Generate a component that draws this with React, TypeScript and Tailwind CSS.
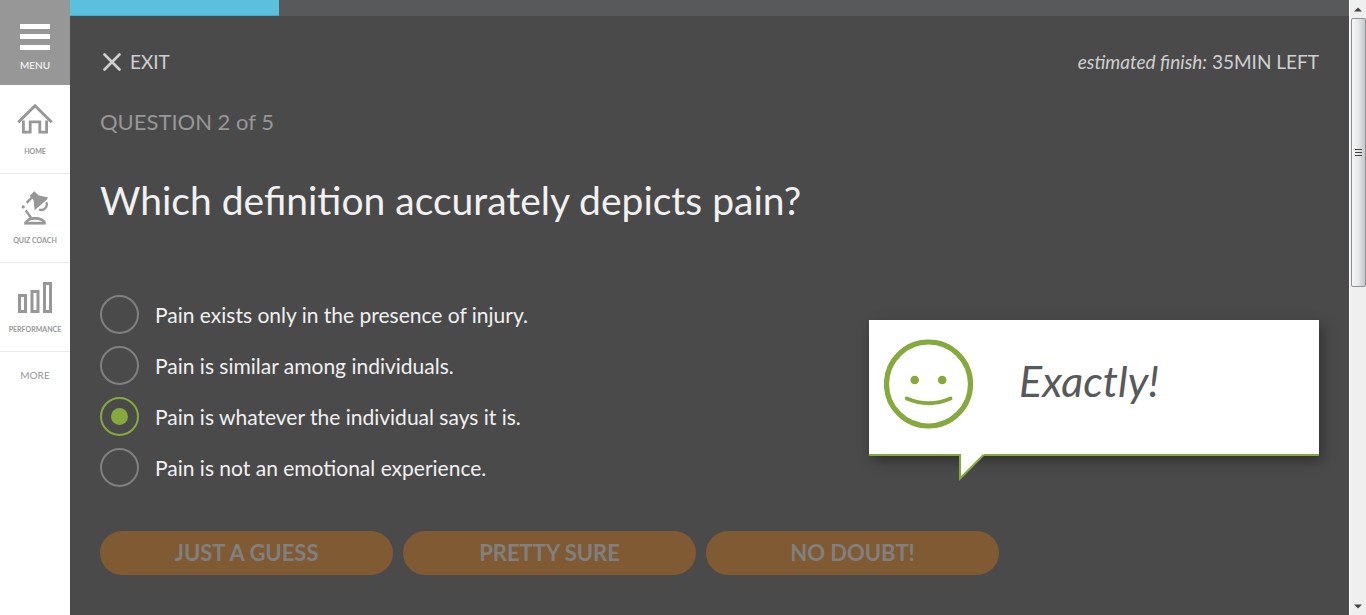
import { useState } from "react";
import type { ReactNode } from "react";

const answers = [
  "Pain exists only in the presence of injury.",
  "Pain is similar among individuals.",
  "Pain is whatever the individual says it is.",
  "Pain is not an emotional experience.",
];

const confidenceLevels = ["JUST A GUESS", "PRETTY SURE", "NO DOUBT!"];

function HomeIcon() {
  return (
    <svg width="36" height="32" viewBox="0 0 36 32" fill="none" stroke="#979797" aria-hidden="true">
      <path d="M1.3 19.200 18 2.800l16.700 16.400" strokeWidth="3" />
      <path d="M6.400 17.500V29.200H13.200V18.800H22.800V29.200H29.600V17.500" strokeWidth="2.800" />
    </svg>
  );
}

function LampIcon() {
  return (
    <svg width="28" height="34" viewBox="0 0 28 34" fill="none" stroke="#979797" aria-hidden="true">
      <path d="M8.700 4.700 13.300 0.200 17.800 4.600 26.700 6.300 26.300 8.200 13.600 19.200 12.600 9z" fill="#979797" stroke="none" />
      <path d="M11 6.300 5.700 11.900" strokeWidth="2.400" />
      <circle cx="2.200" cy="15.900" r="1.600" fill="#979797" stroke="none" />
      <path d="M4.700 19.400 10 26.700" strokeWidth="2.400" />
      <path d="M25.200 11.300C27.500 16 22.500 20.300 18 18.500" strokeWidth="2.300" />
      <path d="M5 32C6.500 25.800 21.500 25.800 23.500 32" strokeWidth="2.600" />
      <path d="M3.200 32.200H24.800" strokeWidth="2.800" />
    </svg>
  );
}

function BarsIcon() {
  return (
    <svg width="34" height="31" viewBox="0 0 34 31" fill="none" stroke="#979797" strokeWidth="3" aria-hidden="true">
      <rect x="1.500" y="13.500" width="6" height="16" />
      <rect x="14" y="9.500" width="6" height="20" />
      <rect x="26.500" y="1.500" width="6" height="28" />
    </svg>
  );
}

function SmileIcon() {
  return (
    <svg width="90" height="90" viewBox="0 0 90 90" fill="none" stroke="#86a93d" aria-hidden="true">
      <circle cx="44.500" cy="45" r="42" strokeWidth="5.200" />
      <circle cx="30.700" cy="41" r="4.300" fill="#86a93d" stroke="none" />
      <circle cx="58.200" cy="41" r="4.300" fill="#86a93d" stroke="none" />
      <path d="M22.800 59.500Q45 69 66.500 59.500" strokeWidth="4" strokeLinecap="round" />
    </svg>
  );
}

function NavItem({ icon, label }: { icon: ReactNode; label: string }) {
  return (
    <li className="border-b border-[#ebebeb]">
      <a href="#" className="flex h-[88px] flex-col items-center pt-4">
        <span className="flex h-9 items-center">{icon}</span>
        <span className="mt-[9px] text-[7px] leading-[10px] font-bold whitespace-nowrap">{label}</span>
      </a>
    </li>
  );
}

function Sidebar() {
  return (
    <nav className="w-[70px] shrink-0 bg-white text-[#979797]">
      <button type="button" className="flex h-[85px] w-full flex-col items-center bg-[#979797] pt-6 text-white">
        <svg width="30" height="26" viewBox="0 0 30 26" fill="currentColor" aria-hidden="true">
          <path d="M0 0h30v5H0zM0 10h30v5H0zM0 21h30v5H0z" />
        </svg>
        <span className="mt-[7px] text-[10px] leading-4">MENU</span>
      </button>
      <ul>
        <NavItem icon={<HomeIcon />} label="HOME" />
        <NavItem icon={<LampIcon />} label="QUIZ COACH" />
        <NavItem icon={<BarsIcon />} label="PERFORMANCE" />
        <li>
          <a href="#" className="block pt-[15px] text-center text-[10px] leading-4">
            MORE
          </a>
        </li>
      </ul>
    </nav>
  );
}

function Feedback() {
  return (
    <div
      role="status"
      className="relative mt-[25px] flex h-[136px] w-[450px] shrink-0 items-start border-b-2 border-[#86a93d] bg-white pt-[19px] pl-[15px] shadow-[3px_5px_12px_rgba(0,0,0,0.35)]"
    >
      <SmileIcon />
      <p className="ml-[45px] pt-3 text-[43px] leading-[60px] text-[#58595b] italic">Exactly!</p>
      <svg className="absolute top-[134px] left-[90px]" width="26" height="27" viewBox="0 0 26 27" aria-hidden="true">
        <path d="M1 0V24.500L24.500 1V0z" fill="#fff" />
        <path d="M1 0V24.500L24.500 1" fill="none" stroke="#86a93d" strokeWidth="2" />
      </svg>
    </div>
  );
}

function ScrollRail() {
  return (
    <div className="flex w-[17px] shrink-0 flex-col items-center border-l border-white bg-[#efefef]" aria-hidden="true">
      <div className="flex h-[18px] items-center">
        <svg width="8" height="5" viewBox="0 0 8 5">
          <path d="M0 4.500 4 0.500 8 4.500z" fill="#444" />
        </svg>
      </div>
      <div className="flex h-[269px] w-[15px] flex-col items-center justify-center rounded-xs border border-[#8f8f8f] bg-linear-to-r from-[#f6f6f6] via-[#e6e7e9] to-[#c5c7cb]">
        <svg width="7" height="8" viewBox="0 0 7 8">
          <path d="M0 .5h7M0 3.500h7M0 6.500h7" stroke="#444" />
        </svg>
      </div>
      <div className="mt-auto flex h-[17px] items-center">
        <svg width="8" height="5" viewBox="0 0 8 5">
          <path d="M0 0.500 4 4.500 8 0.500z" fill="#444" />
        </svg>
      </div>
    </div>
  );
}

export default function App() {
  const [selected, setSelected] = useState(2);

  return (
    <div className="flex min-h-screen bg-[#4a4a4a] font-['Lato',sans-serif]">
      <Sidebar />
      <main className="min-w-0 flex-1">
        <div className="h-4 bg-[#58595b]">
          <div className="h-4 w-[16.34%] border-b border-[#48a9c9] bg-[#5bc0de]" />
        </div>
        <div className="px-[30px] pt-[30px] pb-10">
          <header className="flex h-8 items-center justify-between text-[#d0d0d0]">
            <button type="button" className="flex items-center gap-[9px] pl-[3px] text-[19px] leading-8">
              <svg width="18" height="18" viewBox="0 0 18 18" stroke="currentColor" strokeWidth="2.600" strokeLinecap="round" aria-hidden="true">
                <path d="M1.500 1.500l15 15M16.500 1.500l-15 15" />
              </svg>
              EXIT
            </button>
            <p className="text-[19px] leading-8">
              <em>estimated finish:</em> 35MIN LEFT
            </p>
          </header>
          <p className="mt-7 text-[22px] leading-8 text-[#979797]">QUESTION 2 of 5</p>
          <h1 className="mt-[38px] text-[39px] leading-12 text-[#f1f1f1]">Which definition accurately depicts pain?</h1>
          <div className="mt-[71px] flex items-start justify-between">
            <fieldset aria-label="Answers" className="flex flex-col gap-3">
              {answers.map((answer, index) => (
                <label key={answer} className="flex items-center gap-4 text-[21px] leading-[39px] text-[#f1f1f1]">
                  <input
                    type="radio"
                    name="answer"
                    checked={selected === index}
                    onChange={() => setSelected(index)}
                    className="grid size-[39px] shrink-0 appearance-none place-items-center rounded-full border-2 border-[#808080] before:size-[17px] before:rounded-full checked:border-[#86a93d] checked:before:bg-[#86a93d]"
                  />
                  {answer}
                </label>
              ))}
            </fieldset>
            <Feedback />
          </div>
          <div className="mt-11 flex gap-[10px]">
            {confidenceLevels.map((level) => (
              <button
                key={level}
                type="button"
                disabled
                className="h-11 w-[293px] rounded-full bg-[#805a33] text-[22px] leading-8 font-bold text-[#808080]"
              >
                {level}
              </button>
            ))}
          </div>
        </div>
      </main>
      <ScrollRail />
    </div>
  );
}
